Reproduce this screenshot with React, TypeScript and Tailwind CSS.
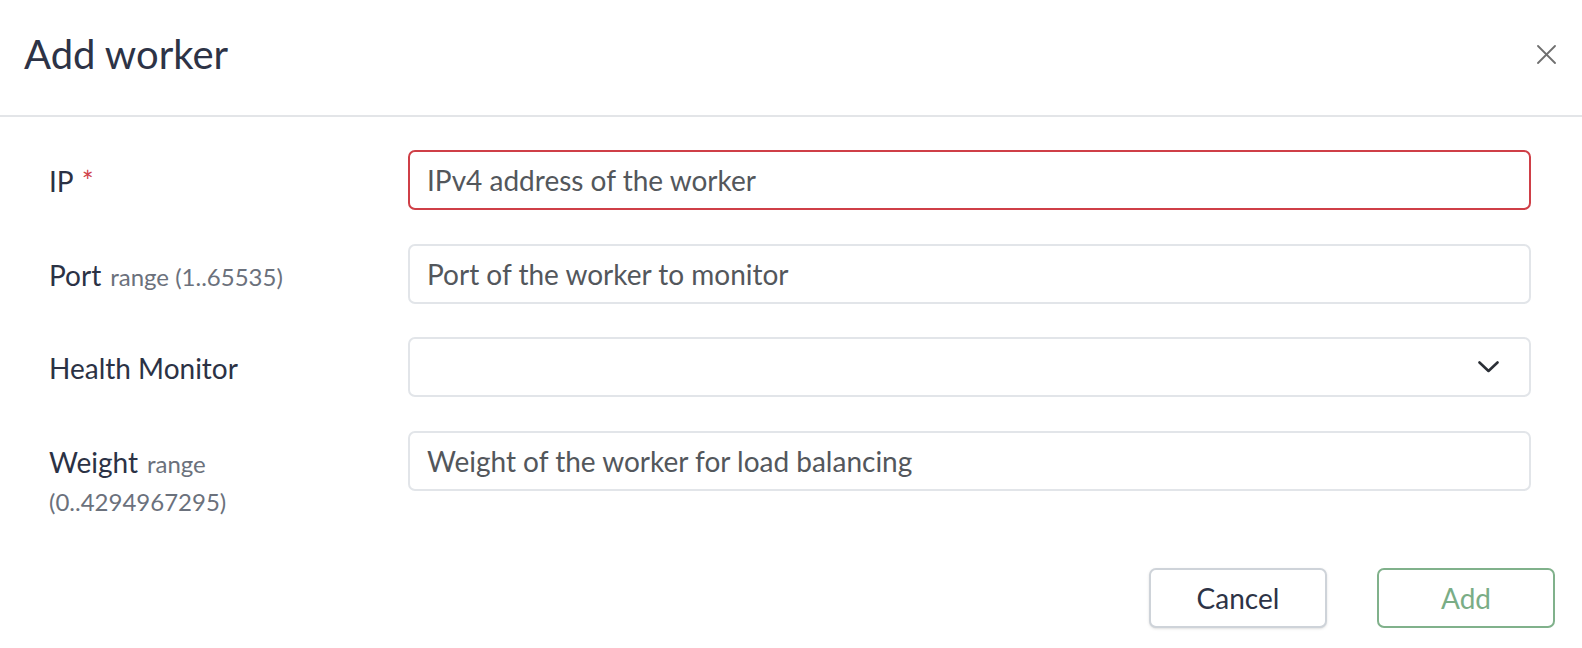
import React from "react";

type Row = {
  label: string;
  hint?: string;
  required?: boolean;
  placeholder?: string;
  select?: boolean;
};

const rows: Row[] = [
  { label: "IP", required: true, placeholder: "IPv4 address of the worker" },
  { label: "Port", hint: "range (1..65535)", placeholder: "Port of the worker to monitor" },
  { label: "Health Monitor", select: true },
  { label: "Weight", hint: "range (0..4294967295)", placeholder: "Weight of the worker for load balancing" },
];

export default function App() {
  return (
    <div className="w-[1582px] h-[648px] bg-white font-['Lato','Liberation_Sans',sans-serif] text-[#2b3245] overflow-hidden">
      {/* header */}
      <div className="h-[117px] flex items-center justify-between pl-6 pr-[26px] border-b-2 border-[#e3e5e8]">
        <h1 className="text-[40px] leading-none text-[#2d3346] pb-[8px]">Add worker</h1>
        <button type="button" className="w-[19px] h-[19px] text-[#6f6f6f] mb-[6px]">
          <svg viewBox="0 0 19 19" width="19" height="19" fill="none" stroke="currentColor" strokeWidth="1.8" strokeLinecap="round">
            <line x1="1" y1="1" x2="18" y2="18" />
            <line x1="18" y1="1" x2="1" y2="18" />
          </svg>
        </button>
      </div>

      {/* form */}
      <div className="pt-[33px] pl-[49px] pr-[51px] flex flex-col gap-[33.5px]">
        {rows.map((r) => (
          <div key={r.label} className="flex items-start">
            <div className="w-[359px] pt-[12px] pr-[44px] text-[28px] leading-[38px]">
              <span>{r.label}</span>
              {r.required && <span className="text-[#d0424b] ml-2">*</span>}
              {r.hint && <span className="text-[24px] leading-[24px] text-[#6b717c] ml-[9px]">{r.hint}</span>}
            </div>
            {r.select ? (
              <div className="flex-1 h-[60px] rounded-[7px] border-2 border-[#e2e5e9] bg-white flex items-center justify-end pr-[30px]">
                <svg width="21" height="12" viewBox="0 0 21 12" fill="none" stroke="#2b2f36" strokeWidth="2.6" strokeLinecap="round" strokeLinejoin="round">
                  <polyline points="1.5,1.5 10.5,10 19.5,1.5" />
                </svg>
              </div>
            ) : (
              <input
                type="text"
                placeholder={r.placeholder}
                className={
                  "flex-1 h-[60px] rounded-[7px] border-2 bg-white px-[17px] text-[28px] text-[#4f5459] placeholder:text-[#53575c] outline-none " +
                  (r.required ? "border-[#cf3f47]" : "border-[#e2e5e9]")
                }
              />
            )}
          </div>
        ))}
      </div>

      {/* footer */}
      <div className="mt-[49px] flex justify-end gap-[50px] pr-[27px]">
        <button
          type="button"
          className="w-[178px] h-[60px] rounded-[7px] border-2 border-[#ced3d9] bg-white text-[28px] text-[#2d3346] shadow-sm"
        >
          Cancel
        </button>
        <button
          type="button"
          className="w-[178px] h-[60px] rounded-[7px] border-2 border-[#80b18b] bg-white text-[28px] text-[#7aad86]"
        >
          Add
        </button>
      </div>
    </div>
  );
}
